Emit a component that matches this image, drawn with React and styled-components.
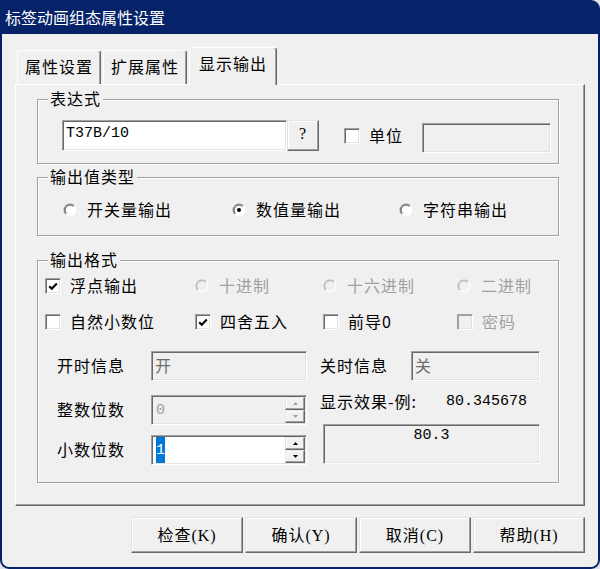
import React from "react";
import styled, { createGlobalStyle } from "styled-components";

const CJK = `"Noto Sans CJK SC", "Noto Sans", sans-serif`;
const MONO = `"Liberation Mono", "Noto Sans CJK SC", monospace`;
const SERIF_MIX = `"Liberation Serif", "Noto Sans CJK SC", serif`;

const GlobalStyle = createGlobalStyle`
  * { box-sizing: border-box; }
  html, body { margin: 0; padding: 0; background: #dfe4ea; }
  body { font-family: ${CJK}; font-size: 16px; color: #000; }
`;

const Window = styled.div`
  width: 600px;
  height: 569px;
  display: flex;
  flex-direction: column;
  background: #062369;
  border-radius: 0 9px 9px 9px;
  padding: 0 2px 2px;
  overflow: hidden;
`;

const TitleBar = styled.div`
  flex: none;
  height: 34px;
  display: flex;
  align-items: center;
  padding: 0 3px 1px;
  color: #fff;
  font-size: 16px;
  line-height: 18px;
`;

const Body = styled.div`
  flex: 1;
  display: flex;
  flex-direction: column;
  background: #f0f0f0;
  padding: 13px 13px 0;
  border-radius: 0 0 7px 7px;
`;

const TabRow = styled.div`
  display: flex;
  align-items: flex-end;
  height: 37px;
  padding-left: 2px;
  position: relative;
  z-index: 1;
`;

const Tab = styled.div`
  flex: none;
  height: ${(p) => (p.$active ? 38 : 34)}px;
  margin: 0 2px ${(p) => (p.$active ? -1 : 0)}px 0;
  padding: 6px ${(p) => (p.$active ? 9 : 7)}px 0;
  line-height: 18px;
  letter-spacing: 1px;
  white-space: nowrap;
  background: #f0f0f0;
  border: 1px solid;
  border-bottom: none;
  border-color: #fff #696969 #f0f0f0 #fff;
  box-shadow: inset -1px 0 #a0a0a0;
  border-radius: 3px 3px 0 0;
`;

const Panel = styled.div`
  display: flex;
  flex-direction: column;
  border: 1px solid;
  border-color: #fff #696969 #696969 #fff;
  box-shadow: inset -1px -1px #a0a0a0;
  padding: 14px 25px 22px 21px;
`;

const Group = styled.div`
  position: relative;
  margin-top: ${(p) => p.$mt || 0}px;
  padding: ${(p) => p.$pad};
  border: 1px solid #a0a0a0;
  box-shadow: inset 1px 1px #fff, 1px 1px #fff;
`;

const Legend = styled.span`
  position: absolute;
  top: -11px;
  left: 10px;
  padding: 0 2px;
  line-height: 18px;
  letter-spacing: 1px;
  background: #f0f0f0;
`;

const FlexRow = styled.div`
  display: flex;
  align-items: flex-start;
  height: ${(p) => p.$h}px;
`;

const OptionGrid = styled.div`
  display: grid;
  grid-template-columns: ${(p) => p.$cols};
  grid-auto-rows: 24px;
  row-gap: 12px;
`;

const Option = styled.span`
  display: flex;
  align-items: center;
  gap: ${(p) => p.$gap ?? 9}px;
  height: 24px;
  margin: ${(p) => p.$mt || 0}px 0 0 ${(p) => p.$ml || 0}px;
  letter-spacing: 1px;
  line-height: 18px;
  white-space: nowrap;
  color: ${(p) => (p.$disabled ? "#a0a0a0" : "#000")};
`;

const OptText = styled.span`
  padding-bottom: 3px;
`;

const Box = styled.span`
  flex: none;
  width: 16px;
  height: 16px;
  display: flex;
  align-items: center;
  justify-content: center;
  background: ${(p) => (p.$disabled ? "#f0f0f0" : "#fff")};
  border: 1px solid;
  border-color: #a0a0a0 #fff #fff #a0a0a0;
  box-shadow: inset 1px 1px ${(p) => (p.$disabled ? "#a0a0a0" : "#696969")},
    inset -1px -1px #e3e3e3;
`;

const Field = styled.div`
  flex: none;
  width: ${(p) => p.$w}px;
  height: ${(p) => p.$h || 30}px;
  margin: ${(p) => p.$mt || 0}px 0 0 ${(p) => p.$ml || 0}px;
  display: flex;
  align-items: ${(p) => (p.$top ? "flex-start" : "center")};
  justify-content: ${(p) => (p.$center ? "center" : "flex-start")};
  padding: ${(p) => (p.$top ? "2px 3px 0" : "0 3px 3px")};
  background: ${(p) => (p.$disabled ? "#f0f0f0" : "#fff")};
  color: ${(p) => (p.$disabled ? "#6d6d6d" : "#000")};
  border: 1px solid;
  border-color: #a0a0a0 #fff #fff #a0a0a0;
  box-shadow: inset 1px 1px #696969, inset -1px -1px #e3e3e3;
  line-height: 18px;
  white-space: nowrap;
`;

const SpinField = styled.div`
  flex: none;
  width: ${(p) => p.$w}px;
  height: 30px;
  display: flex;
  align-items: stretch;
  padding: 1px 1px 1px 4px;
  background: ${(p) => (p.$disabled ? "#f0f0f0" : "#fff")};
  color: ${(p) => (p.$disabled ? "#a0a0a0" : "#000")};
  border: 1px solid;
  border-color: #a0a0a0 #fff #fff #a0a0a0;
  box-shadow: inset 1px 1px #696969, inset -1px -1px #e3e3e3;
`;

const SpinText = styled.div`
  flex: 1;
  display: flex;
  align-items: center;
  font-family: ${MONO};
  font-size: 15px;
`;

const Selected = styled.span`
  align-self: stretch;
  display: flex;
  align-items: center;
  background: #0078d7;
  color: #fff;
`;

const SpinCol = styled.div`
  flex: none;
  width: 20px;
  display: flex;
  flex-direction: column;
`;

const SpinBtn = styled.div`
  flex: 1;
  display: flex;
  align-items: center;
  justify-content: center;
  background: #f0f0f0;
  border: 1px solid;
  border-color: #e3e3e3 #696969 #696969 #e3e3e3;
  box-shadow: inset -1px -1px #a0a0a0, inset 1px 1px #fff;
`;

const Mono = styled.span`
  font-family: ${MONO};
  font-size: 15px;
`;

const Label = styled.span`
  flex: none;
  width: ${(p) => p.$w}px;
  padding-bottom: 3px;
  letter-spacing: 1px;
  line-height: 18px;
  white-space: nowrap;
`;

const Lower = styled.div`
  display: flex;
  gap: 13px;
  margin-top: 17px;
  padding-left: 12px;
`;

const Column = styled.div`
  flex: none;
  width: ${(p) => p.$w}px;
  display: flex;
  flex-direction: column;
`;

const FieldRow = styled.div`
  display: flex;
  align-items: center;
  margin-top: ${(p) => p.$mt || 0}px;
`;

const SampleRow = styled.div`
  display: flex;
  align-items: center;
  height: 18px;
  margin-top: 12px;
  line-height: 18px;
`;

const ButtonBar = styled.div`
  display: flex;
  justify-content: flex-end;
  gap: 2px;
  margin-top: 11px;
`;

const PushButton = styled.button`
  flex: none;
  width: ${(p) => p.$w}px;
  height: ${(p) => p.$h}px;
  margin: 0;
  padding: 0 0 3px;
  display: flex;
  align-items: center;
  justify-content: center;
  font-family: ${SERIF_MIX};
  font-size: 16px;
  letter-spacing: 1px;
  color: #000;
  background: #f0f0f0;
  border: 1px solid;
  border-color: #e3e3e3 #696969 #696969 #e3e3e3;
  box-shadow: inset -1px -1px #a0a0a0, inset 1px 1px #fff;
`;

function CheckBox({ checked, disabled, children, ...rest }) {
  return (
    <Option $disabled={disabled} {...rest}>
      <Box $disabled={disabled}>
        {checked && (
          <svg width="10" height="9" viewBox="0 0 10 9">
            <path d="M1.2 4.2 L3.8 6.8 L8.8 1.6" fill="none" stroke="#000" strokeWidth="2.1" />
          </svg>
        )}
      </Box>
      <OptText>{children}</OptText>
    </Option>
  );
}

function Radio({ checked, disabled, children, ...rest }) {
  return (
    <Option $gap={10} $disabled={disabled} {...rest}>
      <svg width="14" height="14" viewBox="0 0 14 14" style={{ flex: "none" }}>
        <circle cx="7" cy="7" r="6" fill={disabled ? "#f0f0f0" : "#fff"} />
        <path d="M2.76 11.24 A6 6 0 0 1 11.24 2.76" fill="none" stroke={disabled ? "#b4b4b4" : "#8a8a8a"} strokeWidth="1.2" />
        <path d="M11.24 2.76 A6 6 0 0 1 2.76 11.24" fill="none" stroke="#ffffff" strokeWidth="1.2" />
        <path d="M3.6 10.4 A4.8 4.8 0 0 1 10.4 3.6" fill="none" stroke={disabled ? "#d0d0d0" : "#5a5a5a"} strokeWidth="0.9" />
        {checked && <circle cx="7" cy="7" r="2" fill="#000" />}
      </svg>
      <OptText>{children}</OptText>
    </Option>
  );
}

function Arrow({ up, color }) {
  return (
    <svg width="5" height="3" viewBox="0 0 5 3">
      <path d={up ? "M0 3 L2.5 0 L5 3Z" : "M0 0 L2.5 3 L5 0Z"} fill={color} />
    </svg>
  );
}

function Spinner({ disabled }) {
  const c = disabled ? "#a0a0a0" : "#000";
  return (
    <SpinCol>
      <SpinBtn>
        <Arrow up color={c} />
      </SpinBtn>
      <SpinBtn>
        <Arrow color={c} />
      </SpinBtn>
    </SpinCol>
  );
}

export default function App() {
  return (
    <>
      <GlobalStyle />
      <Window>
        <TitleBar>标签动画组态属性设置</TitleBar>
        <Body>
          <TabRow>
            <Tab>属性设置</Tab>
            <Tab>扩展属性</Tab>
            <Tab $active>显示输出</Tab>
          </TabRow>
          <Panel>
            <Group $pad="20px 0 12px 24px">
              <Legend>表达式</Legend>
              <FlexRow $h={31}>
                <Field $w={225} $h={31}>
                  <Mono>T37B/10</Mono>
                </Field>
                <PushButton $w={32} $h={31}>?</PushButton>
                <CheckBox $ml={25} $mt={4}>单位</CheckBox>
                <Field $w={129} $ml={19} $mt={3} $disabled />
              </FlexRow>
            </Group>

            <Group $mt={13} $pad="20px 0 13px 25px">
              <Legend>输出值类型</Legend>
              <OptionGrid $cols="169px 167px 1fr">
                <Radio>开关量输出</Radio>
                <Radio checked>数值量输出</Radio>
                <Radio>字符串输出</Radio>
              </OptionGrid>
            </Group>

            <Group $mt={24} $pad="13px 0 17px 7px">
              <Legend>输出格式</Legend>
              <OptionGrid $cols="150px 128px 134px 1fr">
                <CheckBox checked>浮点输出</CheckBox>
                <Radio disabled>十进制</Radio>
                <Radio disabled>十六进制</Radio>
                <Radio disabled>二进制</Radio>
                <CheckBox>自然小数位</CheckBox>
                <CheckBox checked>四舍五入</CheckBox>
                <CheckBox>前导0</CheckBox>
                <CheckBox disabled>密码</CheckBox>
              </OptionGrid>

              <Lower>
                <Column $w={250}>
                  <FieldRow>
                    <Label $w={94}>开时信息</Label>
                    <Field $w={156} $disabled>开</Field>
                  </FieldRow>
                  <FieldRow $mt={14}>
                    <Label $w={94}>整数位数</Label>
                    <SpinField $w={156} $disabled>
                      <SpinText>0</SpinText>
                      <Spinner disabled />
                    </SpinField>
                  </FieldRow>
                  <FieldRow $mt={10}>
                    <Label $w={94}>小数位数</Label>
                    <SpinField $w={156}>
                      <SpinText>
                        <Selected>1</Selected>
                      </SpinText>
                      <Spinner />
                    </SpinField>
                  </FieldRow>
                </Column>

                <Column $w={220}>
                  <FieldRow>
                    <Label $w={91}>关时信息</Label>
                    <Field $w={129} $disabled>关</Field>
                  </FieldRow>
                  <SampleRow>
                    <Label $w={126}>显示效果-例:</Label>
                    <Mono>80.345678</Mono>
                  </SampleRow>
                  <Field $w={217} $h={40} $mt={13} $ml={3} $top $center $disabled>
                    <Mono style={{ color: "#000" }}>80.3</Mono>
                  </Field>
                </Column>
              </Lower>
            </Group>
          </Panel>

          <ButtonBar>
            <PushButton $w={112} $h={36}>检查(K)</PushButton>
            <PushButton $w={112} $h={36}>确认(Y)</PushButton>
            <PushButton $w={112} $h={36}>取消(C)</PushButton>
            <PushButton $w={112} $h={36}>帮助(H)</PushButton>
          </ButtonBar>
        </Body>
      </Window>
    </>
  );
}
